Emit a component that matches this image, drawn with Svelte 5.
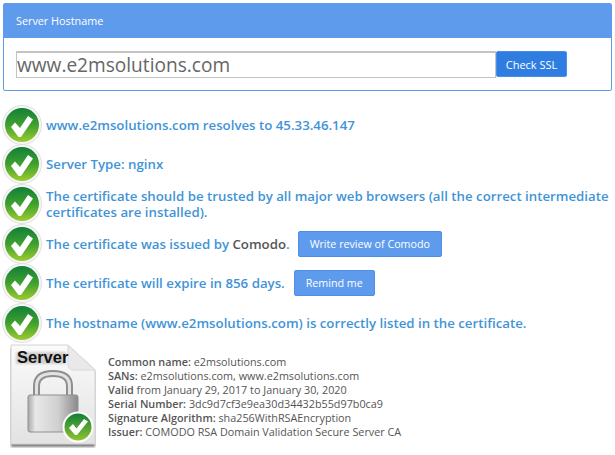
<script>
    const host = "www.e2msolutions.com";
</script>

{#snippet check()}
    <svg class="check" viewBox="0 0 40 40" aria-hidden="true">
        <defs>
            <linearGradient id="ball" x1="0" y1="0" x2="0" y2="1">
                <stop offset="0" stop-color="#117f38" />
                <stop offset="0.5" stop-color="#3fa02f" />
                <stop offset="1" stop-color="#9ccb2e" />
            </linearGradient>
        </defs>
        <circle cx="20" cy="20" r="19.5" fill="#f6f6f6" stroke="#e0e0e0" />
        <circle cx="20" cy="20" r="17" fill="url(#ball)" />
        <path d="M9 22 L13 17.5 L18 23 L26 11 L31 14.5 L19 32 L16.5 32 Z" fill="#fff" />
    </svg>
{/snippet}

<div class="page">
    <section class="panel">
        <div class="panel-head">Server Hostname</div>
        <div class="panel-body">
            <input type="text" value={host} />
            <button class="go">Check SSL</button>
        </div>
    </section>

    <div class="results">
        <div class="row">
            {@render check()}
            <p>www.e2msolutions.com resolves to 45.33.46.147</p>
        </div>
        <div class="row">
            {@render check()}
            <p>Server Type: nginx</p>
        </div>
        <div class="row">
            {@render check()}
            <p>The certificate should be trusted by all major web browsers (all the correct intermediate certificates are installed).</p>
        </div>
        <div class="row">
            {@render check()}
            <p>The certificate was issued by <span class="dark">Comodo</span>.</p>
            <button class="act review">Write review of Comodo</button>
        </div>
        <div class="row">
            {@render check()}
            <p>The certificate will expire in 856 days.</p>
            <button class="act">Remind me</button>
        </div>
        <div class="row">
            {@render check()}
            <p>The hostname (www.e2msolutions.com) is correctly listed in the certificate.</p>
        </div>
    </div>

    <div class="cert">
        <svg class="doc" viewBox="0 0 86 104" aria-hidden="true">
            <defs>
                <linearGradient id="sheet" x1="0" y1="0" x2="0" y2="1">
                    <stop offset="0" stop-color="#fbfbfb" />
                    <stop offset="1" stop-color="#e2e2e2" />
                </linearGradient>
                <linearGradient id="lockbody" x1="0" y1="0" x2="1" y2="0">
                    <stop offset="0" stop-color="#a8a8a8" />
                    <stop offset="0.15" stop-color="#e8e8e8" />
                    <stop offset="0.6" stop-color="#d0d0d0" />
                    <stop offset="1" stop-color="#8a8a8a" />
                </linearGradient>
                <linearGradient id="badge" x1="0" y1="0" x2="0" y2="1">
                    <stop offset="0" stop-color="#117f38" />
                    <stop offset="1" stop-color="#8fc42e" />
                </linearGradient>
                <filter id="soft" x="-20%" y="-20%" width="140%" height="140%">
                    <feGaussianBlur stdDeviation="1.2" />
                </filter>
            </defs>
            <path d="M1 4 H58 L85 27 V103 H1 Z" fill="#808080" filter="url(#soft)" />
            <path d="M1 1 H58 L85 26 V100 H1 Z" fill="url(#sheet)" stroke="#d4d4d4" />
            <path d="M58 1 L85 26 H64 Q58 26 58 20 Z" fill="#e9e9e9" stroke="#d8d8d8" />
            <rect x="6" y="8" width="50" height="12" fill="#cfcfcf" filter="url(#soft)" />
            <text x="7" y="19" class="doc-label">Server</text>
            <path d="M26.5 52 V42 Q26.5 29.5 43 29.5 Q59.5 29.5 59.5 42 V52" fill="none" stroke="#8f8f8f" stroke-width="7" />
            <path d="M26.5 52 V42 Q26.5 29.5 43 29.5 Q59.5 29.5 59.5 42 V52" fill="none" stroke="#e2e2e2" stroke-width="3" />
            <rect x="18" y="51" width="50" height="37" rx="2" fill="url(#lockbody)" stroke="#909090" />
            <circle cx="68" cy="83" r="15.5" fill="#fff" />
            <circle cx="68" cy="83" r="13.5" fill="url(#badge)" />
            <path d="M59 84 L63 80 L66.5 84.5 L74 75 L78 77.5 L67 91 L65 91 Z" fill="#fff" />
        </svg>
        <div class="details">
            <div><b>Common name:</b> e2msolutions.com</div>
            <div><b>SANs:</b> e2msolutions.com, www.e2msolutions.com</div>
            <div><b>Valid</b> from January 29, 2017 to January 30, 2020</div>
            <div><b>Serial Number:</b> 3dc9d7cf3e9ea30d34432b55d97b0ca9</div>
            <div><b>Signature Algorithm:</b> sha256WithRSAEncryption</div>
            <div><b>Issuer:</b> COMODO RSA Domain Validation Secure Server CA</div>
        </div>
    </div>
</div>

<style>
    :global(body) {
        background: #fff;
        font-family: "Open Sans", "Liberation Sans", sans-serif;
    }
    .page {
        width: 615px;
        height: 455px;
        overflow: hidden;
        padding: 3px 3px 0;
        box-sizing: border-box;
    }
    .panel {
        border: 1px solid #5f9bec;
        border-radius: 2px;
        height: 88px;
        box-sizing: border-box;
    }
    .panel-head {
        background: #5f9bec;
        color: #fff;
        font-size: 10.8px;
        height: 34px;
        line-height: 34px;
        padding-left: 12px;
    }
    .panel-body {
        display: flex;
        padding: 13px 12px 0;
    }
    input {
        width: 480px;
        height: 27px;
        box-sizing: border-box;
        border: 1px solid #c4c4c4;
        border-top-width: 2px;
        padding: 0;
        font-family: inherit;
        font-size: 19.1px;
        color: #666;
        outline: none;
    }
    .go {
        width: 71px;
        height: 26px;
        background: #2f7de1;
        border: 1px solid #4b8fe8;
        border-radius: 2px;
        color: #fff;
        font-family: inherit;
        font-size: 11px;
        padding: 0;
    }
    .results {
        margin-top: 14px;
        display: flex;
        flex-direction: column;
    }
    .row {
        display: flex;
        align-items: center;
        height: 39.6px;
    }
    .check {
        width: 40px;
        height: 40px;
        flex: none;
        margin: 0 4px 0 -1px;
    }
    p {
        margin: 0;
        font-size: 13.25px;
        font-weight: 600;
        line-height: 16px;
        color: #3f94d8;
    }
    .dark {
        color: #555;
    }
    .act {
        height: 26px;
        margin-left: 9px;
        padding: 0 11px;
        background: #5f9bec;
        border: 1px solid #4b8fe8;
        border-radius: 2px;
        color: #fff;
        font-family: inherit;
        font-size: 10.7px;
    }
    .review {
        margin-left: 8px;
    }
    .cert {
        display: flex;
        align-items: flex-start;
        margin-top: 1px;
        padding-left: 7px;
    }
    .doc {
        width: 86px;
        height: 104px;
        flex: none;
    }
    .doc-label {
        font-family: "Liberation Sans", sans-serif;
        font-size: 16.5px;
        font-weight: 700;
        fill: #111;
    }
    .details {
        margin: 11px 0 0 12px;
        font-size: 10.8px;
        line-height: 14px;
        color: #555;
    }
    b {
        font-weight: 600;
    }
</style>
